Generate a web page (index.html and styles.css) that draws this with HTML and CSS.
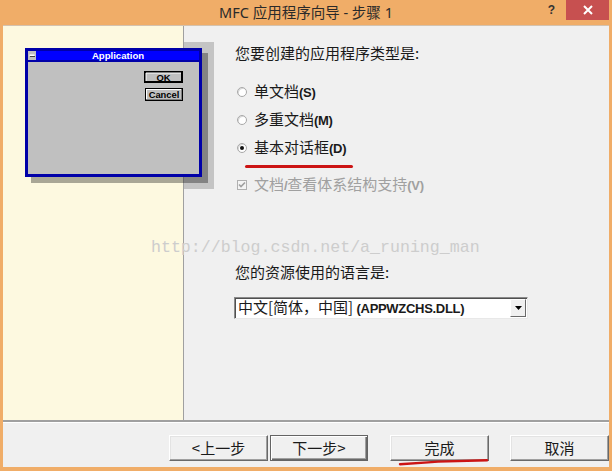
FILE: index.html
```html
<!DOCTYPE html>
<html lang="zh-CN">
<head>
<meta charset="utf-8">
<title>MFC 应用程序向导 - 步骤 1</title>
<link rel="stylesheet" href="styles.css">
</head>
<body>
<div class="window">
  <div class="titlebar">
    <div class="tb-spacer"></div>
    <div class="title">MFC 应用程序向导 - 步骤 1</div>
    <div class="controls">
      <span class="help">?</span>
      <span class="close">
        <svg width="10" height="10" viewBox="0 0 10 10"><path d="M1 1L9 9M9 1L1 9" stroke="#fff" stroke-width="2"/></svg>
      </span>
    </div>
  </div>
  <div class="client">
    <div class="main">
      <div class="sidebar">
        <svg class="preview" width="196" height="152" viewBox="0 0 196 152">
          <rect x="164" y="2" width="30" height="147" fill="#c4c4c4"/>
          <rect x="11" y="13" width="177" height="130" fill="#000" opacity="0.33"/>
          <rect x="5" y="8" width="177" height="129" fill="#0000a8"/>
          <rect x="8" y="11" width="171" height="9" fill="#0000ff"/>
          <rect x="8" y="22" width="171" height="112" fill="#c0c0c0"/>
          <rect x="8" y="11" width="8" height="9" fill="#c0c0c0"/>
          <rect x="9.5" y="14.5" width="5" height="1.5" fill="#fff"/>
          <rect x="10" y="16" width="5" height="1" fill="#404040"/>
          <text x="98" y="18.8" class="pv-title">Application</text>
          <rect x="124" y="31" width="39" height="12" fill="#000"/>
          <rect x="126" y="33" width="35" height="8" fill="#c0c0c0"/>
          <path d="M126 33H161M126 33V41" stroke="#fff" stroke-width="1" fill="none"/>
          <text x="143.5" y="40.8" class="pv-btn">OK</text>
          <rect x="125" y="48" width="38" height="13" fill="#000"/>
          <rect x="126" y="49" width="36" height="11" fill="#808080"/>
          <rect x="126" y="49" width="35" height="10" fill="#fff"/>
          <rect x="127" y="50" width="34" height="9" fill="#c0c0c0"/>
          <text x="144" y="58.3" class="pv-btn">Cancel</text>
        </svg>
      </div>
      <div class="content">
        <p class="label q1">您要创建的应用程序类型是:</p>
        <div class="options">
          <div class="option"><span class="radio"></span><span>单文档<b class="mn">(S)</b></span></div>
          <div class="option"><span class="radio"></span><span>多重文档<b class="mn">(M)</b></span></div>
          <div class="option"><span class="radio checked"></span><span>基本对话框<b class="mn">(D)</b></span></div>
        </div>
        <div class="redline"></div>
        <div class="option check disabled">
          <span class="checkbox">
            <svg width="8" height="8" viewBox="0 0 8 8"><path d="M1 3.5L3 5.5L7 1.5" stroke="#a0a0a0" stroke-width="1.6" fill="none"/></svg>
          </span>
          <span>文档<b class="mn">/</b>查看体系结构支持<b class="mn">(V)</b></span>
        </div>
        <p class="label q2">您的资源使用的语言是:</p>
        <div class="combo">
          <span class="combo-text">中文[简体，中国] <b class="mn">(APPWZCHS.DLL)</b></span>
          <span class="combo-btn">
            <svg width="7" height="4" viewBox="0 0 7 4"><path d="M0 0H7L3.5 4Z" fill="#000"/></svg>
          </span>
        </div>
      </div>
      <div class="watermark">http://blog.csdn.net/a_runing_man</div>
    </div>
    <div class="footer">
      <button class="btn prev">&lt;上一步</button>
      <button class="btn next default">下一步&gt;</button>
      <button class="btn finish">完成</button>
      <button class="btn cancel">取消</button>
      <svg class="mark" width="96" height="8" viewBox="0 0 96 8"><path d="M2 6.2L30 4.4L40 3.6L89 2.2" stroke="#cc1414" stroke-width="2.4" stroke-linecap="round" fill="none"/></svg>
    </div>
  </div>
</div>
</body>
</html>
```

FILE: styles.css
```css
* { box-sizing: border-box; }
html, body { margin: 0; padding: 0; }
body {
  width: 612px;
  height: 471px;
  overflow: hidden;
  font-family: "Noto Sans CJK SC", "Noto Sans", sans-serif;
  color: #1a1a1a;
}
.window {
  width: 612px;
  height: 471px;
  background: #f0ad68;
  display: flex;
  flex-direction: column;
}
.titlebar {
  height: 25px;
  display: grid;
  grid-template-columns: 1fr auto 1fr;
  align-items: start;
}
.title {
  font-family: "Noto Sans", "Noto Sans CJK SC", sans-serif;
  font-size: 14.5px;
  line-height: 24px;
  color: #2a2a2a;
  white-space: nowrap;
}
.controls {
  display: flex;
  justify-content: flex-end;
  align-items: flex-start;
  padding-right: 3px;
}
.help {
  font-family: "Liberation Sans", sans-serif;
  font-weight: 700;
  font-size: 12px;
  line-height: 20px;
  color: #333;
  margin-right: 11px;
}
.close {
  width: 43px;
  height: 20px;
  background: #c75050;
  display: flex;
  align-items: center;
  justify-content: center;
}
.client {
  margin: 0 3px;
  height: 442px;
  background: #f0f0f0;
  border-top: 1px solid #d4c2ae;
  display: flex;
  flex-direction: column;
}
.main {
  position: relative;
  height: 394px;
  display: flex;
}
.sidebar {
  position: relative;
  width: 181px;
  flex: none;
  border-right: 1px solid #a0a0a0;
  background-color: #fdf9e0;
}
.preview {
  position: absolute;
  left: 17px;
  top: 14px;
  z-index: 1;
}
.pv-title {
  font-family: "Liberation Sans", sans-serif;
  font-weight: 700;
  font-size: 9.6px;
  fill: #fff;
  text-anchor: middle;
}
.pv-btn {
  font-family: "Liberation Sans", sans-serif;
  font-weight: 700;
  font-size: 9.4px;
  fill: #000;
  text-anchor: middle;
}
.content {
  flex: 1;
  padding-left: 51px;
  display: flex;
  flex-direction: column;
  align-items: flex-start;
}
.label {
  margin: 0;
  height: 20px;
  font-size: 15px;
  line-height: 20px;
  white-space: nowrap;
}
.q1 { margin-top: 17px; }
.options {
  margin-top: 15px;
  display: flex;
  flex-direction: column;
}
.option {
  height: 28px;
  display: flex;
  align-items: center;
  font-size: 15px;
  line-height: 20px;
  margin-left: 2px;
  white-space: nowrap;
}
.options .option:last-child { height: 27px; }
.mn {
  font-family: "Liberation Sans", sans-serif;
  font-weight: 700;
  font-size: 13px;
  letter-spacing: -0.3px;
}
.radio {
  width: 10px;
  height: 10px;
  border-radius: 50%;
  background: #fff;
  border: 1px solid #a8a8a8;
  box-shadow: inset 1px 1px 0 #d8d8d8;
  margin-right: 7px;
  display: flex;
  align-items: center;
  justify-content: center;
}
.radio.checked::after {
  content: "";
  width: 4px;
  height: 4px;
  border-radius: 50%;
  background: #111;
}
.redline {
  margin-top: 4px;
  margin-left: 10px;
  width: 108px;
  height: 3px;
  border-radius: 2px;
  background: #cc1414;
}
.check {
  margin-top: 7px;
  height: 20px;
}
.disabled { color: #a0a0a0; }
.checkbox {
  width: 10px;
  height: 10px;
  border: 1px solid #b0b0b0;
  background: #f4f4f4;
  margin-right: 7px;
  display: flex;
  align-items: center;
  justify-content: center;
}
.q2 { margin-top: 67px; }
.combo {
  margin-top: 15px;
  margin-left: -1px;
  width: 294px;
  height: 22px;
  background: #fff;
  border: 1px solid;
  border-color: #8a8a8a #e8e8e8 #e8e8e8 #8a8a8a;
  box-shadow: inset 1px 1px 0 #505050;
  display: flex;
  align-items: center;
  justify-content: space-between;
  padding: 0 1px 0 3px;
}
.combo-text {
  font-size: 15px;
  line-height: 20px;
  white-space: nowrap;
}
.combo-btn {
  width: 16px;
  height: 18px;
  background: #f0f0f0;
  border: 1px solid;
  border-color: #fff #696969 #696969 #fff;
  display: flex;
  align-items: center;
  justify-content: center;
}
.watermark {
  position: absolute;
  left: 148px;
  top: 212px;
  font-family: "Liberation Mono", monospace;
  font-size: 16.6px;
  line-height: 20px;
  color: #cdcdcd;
  white-space: nowrap;
  z-index: 2;
  pointer-events: none;
}
.footer {
  position: relative;
  flex: 1;
  border-top: 2px solid #a0a0a0;
  box-shadow: inset 0 1px 0 #fff;
  display: flex;
  align-items: flex-start;
  justify-content: flex-end;
  padding-top: 13px;
  padding-right: 0;
}
.btn {
  width: 99px;
  height: 26px;
  padding: 0;
  font-family: "Noto Sans CJK SC", sans-serif;
  font-size: 15px;
  line-height: 22px;
  color: #1a1a1a;
  background: #f0f0f0;
  border: 1px solid;
  border-color: #fff #696969 #696969 #fff;
  box-shadow: inset -1px -1px 0 #a0a0a0, inset 1px 1px 0 #e3e3e3;
}
.btn.default {
  width: 98px;
  border-color: #646464;
  box-shadow: inset 1px 1px 0 #fff, inset -1px -1px 0 #696969, inset -2px -2px 0 #a0a0a0;
}
.next { margin-left: 2px; }
.finish { margin-left: 22px; }
.cancel { margin-left: 21px; }
.mark {
  position: absolute;
  left: 395px;
  top: 36px;
}
```
